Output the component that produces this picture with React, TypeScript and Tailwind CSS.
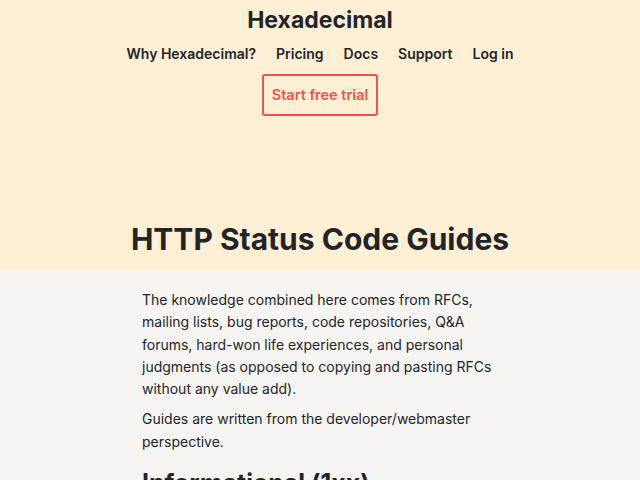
export default function App() {
  const nav = ["Why Hexadecimal?", "Pricing", "Docs", "Support", "Log in"]
  return (
    <div className="min-h-screen bg-[#f7f5f1] text-[#212529] font-['Inter',sans-serif]">
      <header className="bg-[#fff0d5] pb-[10px]">
        <div className="flex flex-col items-center">
          <h2 className="pt-[4px] text-[23px] leading-[32px] font-bold">Hexadecimal</h2>
          <nav className="mt-[6px] flex gap-[20px] text-[14px] leading-[24px] font-semibold">
            {nav.map((n) => (
              <a key={n} href="#">{n}</a>
            ))}
          </nav>
          <a
            href="#"
            className="mt-[8px] flex h-[42px] w-[116px] items-center justify-center rounded-[3px] border-2 border-[#ef5350] text-[14.5px] font-semibold text-[#ef5350]"
          >
            Start free trial
          </a>
        </div>
        <h1 className="mt-[101px] text-center text-[30px] leading-[44px] font-bold">HTTP Status Code Guides</h1>
      </header>
      <main className="mx-auto w-[356px] pt-[18px] text-[14px] leading-[22.3px]">
        <p>
          The knowledge combined here comes from RFCs, mailing lists, bug reports, code repositories, Q&amp;A
          forums, hard-won life experiences, and personal judgments (as opposed to copying and pasting RFCs
          without any value add).
        </p>
        <p className="mt-[8px]">Guides are written from the developer/webmaster perspective.</p>
        <h2 className="mt-[12px] text-[25px] leading-[36px] font-bold">Informational (1xx)</h2>
      </main>
    </div>
  )
}
